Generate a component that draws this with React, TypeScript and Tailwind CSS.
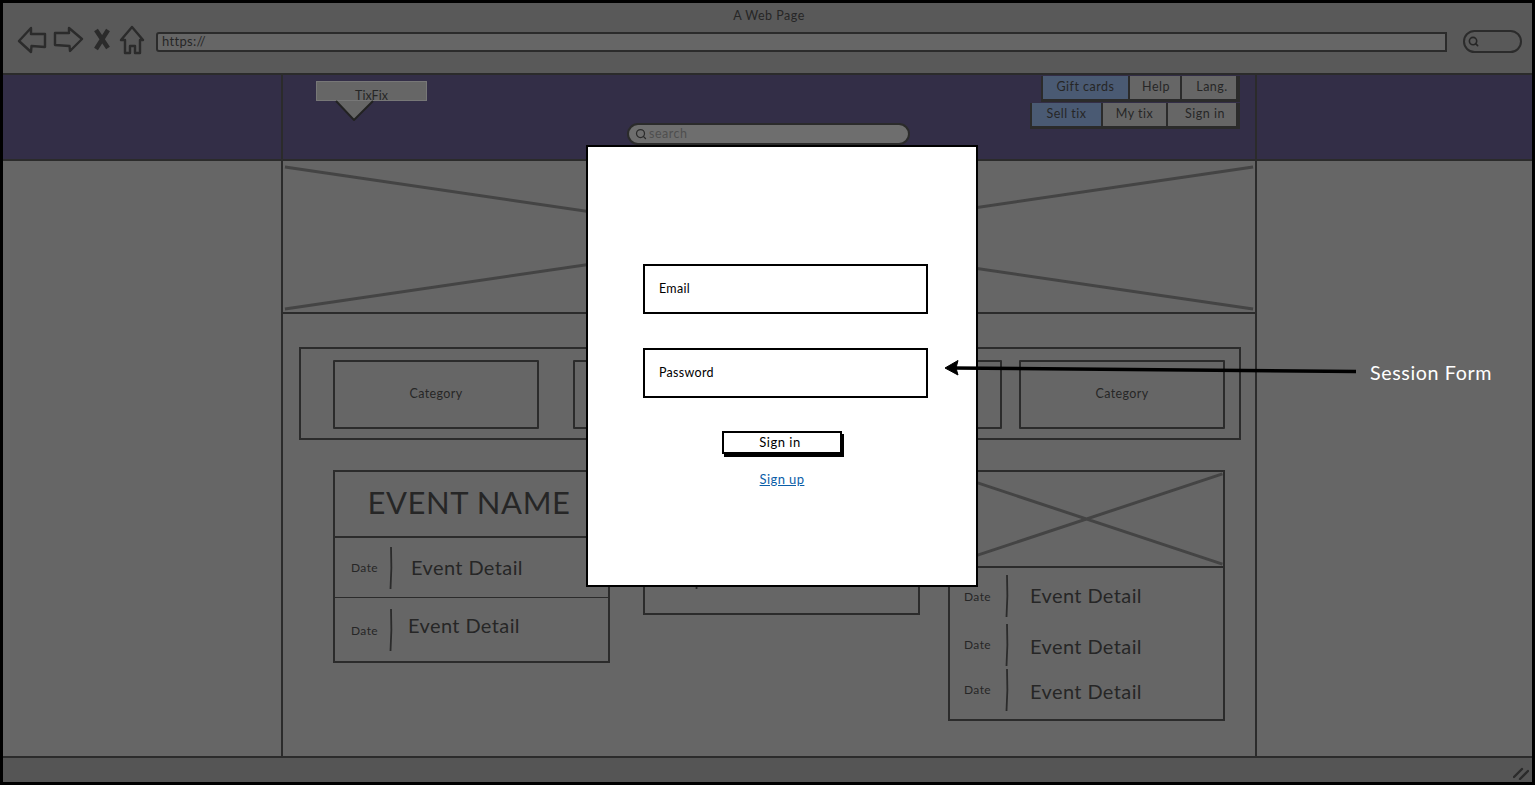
import { Search } from 'lucide-react'

const sketchFont = "[font-family:Lato,'Noto_Sans',sans-serif]"

function Cross() {
  return (
    <svg className="absolute inset-0 h-full w-full" viewBox="0 0 100 100" preserveAspectRatio="none">
      <path d="M0.2 2 L99.8 98 M0.2 98 L99.8 2" fill="none" stroke="#444" strokeWidth="3" vectorEffect="non-scaling-stroke" />
    </svg>
  )
}

function Detail({ className, dateClass, textClass }: { className: string; dateClass: string; textClass: string }) {
  return (
    <div className={`relative flex items-center ${className}`}>
      <span className={`text-[12px] tracking-[0.4px] text-[#262626] ${dateClass}`}>Date</span>
      <svg width="4" height="44" viewBox="0 0 4 44" className="shrink-0">
        <path d="M2 1 Q3 22 1.5 43" fill="none" stroke="#2b2b2b" strokeWidth="1.8" />
      </svg>
      <span className={`text-[20px] leading-7 tracking-[0.4px] text-[#262626] ${textClass}`}>Event Detail</span>
    </div>
  )
}

function CategoryBox({ className }: { className: string }) {
  return (
    <div className={`flex h-[69px] w-[206px] shrink-0 items-center justify-center rounded-[1px] border-2 border-[#2b2b2b] text-[12.5px] tracking-[0.4px] text-[#262626] ${className}`}>
      Category
    </div>
  )
}

function NavButton({ label, className, active }: { label: string; className: string; active?: boolean }) {
  return (
    <div className={`flex h-[23px] items-center justify-center text-[12.5px] tracking-[0.5px] text-[#262626] ${active ? 'bg-[#4a5a73]' : 'bg-[#666]'} ${className}`}>
      {label}
    </div>
  )
}

export default function App() {
  return (
    <div className={`relative h-[786px] w-full overflow-hidden bg-white text-[#262626] ${sketchFont}`}>
      <div className="flex h-[785px] flex-col border-[3px] border-black bg-[#666]">
        {/* Browser toolbar */}
        <div className="relative h-[72px] shrink-0 border-b-2 border-[#2b2b2b] bg-[#595959]">
          <div className="pl-[3px] pt-[5px] text-center text-[12.5px] leading-4 tracking-[0.5px]">A Web Page</div>
          <div className="mt-[1px] flex items-center pl-[14px]">
            <svg width="130" height="32" viewBox="0 0 130 32" className="shrink-0" fill="none" stroke="#2b2b2b" strokeWidth="2.4" strokeLinejoin="round">
              <path d="M14 3 L2 16 L14 27 L14.5 21 L28 22 L28 9 L14 9 Z" />
              <path d="M52 3 L65 14 L53 26 L52.5 21 L38 20 L38 8 L52 8 Z" />
              <path d="M79 5 L91 23 M91 5 L79 24" strokeWidth="4.5" strokeLinejoin="miter" />
              <path d="M115 2 L104 15 L108 15 L108 28 L113 28 L113 21 L118 21 L118 28 L123 28 L123 15 L126 15 Z" />
            </svg>
            <div className="ml-[9px] mt-[2px] flex h-[20px] w-[1291px] shrink-0 items-center rounded-l-[3px] border-2 border-[#2b2b2b] bg-[#666] pl-[4px] text-[13px] tracking-[0.3px]">
              https://
            </div>
            <div className="ml-[16px] flex h-[23px] w-[59px] shrink-0 items-center rounded-full border-2 border-[#2b2b2b] pl-[3px]">
              <Search size={11} strokeWidth={3.5} />
            </div>
          </div>
        </div>

        {/* Site header */}
        <div className="flex h-[86px] shrink-0 border-b-2 border-[#2b2b2b] bg-[#332e47]">
          <div className="w-[278px] shrink-0" />
          <div className="relative flex w-[976px] shrink-0 items-start border-x-2 border-[#2b2b2b]">
            <div className="relative ml-[33px] mt-[6px] h-[20px] w-[111px] shrink-0 border border-[#777] bg-[#666] pt-[6px] text-center text-[12.5px] leading-4">
              <span className="relative z-10">TixFix</span>
              <svg width="40" height="21" viewBox="0 0 40 21" className="absolute left-[18px] top-[18px]">
                <path d="M1 1 L19 20 L38 1 Z" fill="#666" />
                <path d="M1 1 L19 20 L38 1" fill="none" stroke="#222" strokeWidth="2" />
              </svg>
            </div>
            <div className="ml-[200px] mt-[48px] flex h-[22px] w-[283px] shrink-0 items-center rounded-full border-2 border-[#2b2b2b] bg-[#6e6e6e] pl-[6px] text-[12.5px] tracking-[0.5px] text-[#4f4f4f]">
              <Search size={12} strokeWidth={2.5} className="mr-[2px] text-[#2b2b2b]" />
              search
            </div>
            <div className="ml-auto mr-[15px] mt-[1px] flex flex-col items-end gap-[1px]">
              <div className="flex gap-[2px] border-b-[3px] border-l-[2px] border-r-[4px] border-[#2b2b2b] bg-[#2b2b2b]">
                <NavButton label="Gift cards" active className="w-[85px]" />
                <NavButton label="Help" className="w-[50px] pl-[2px]" />
                <NavButton label="Lang." className="w-[54px] pl-[6px]" />
              </div>
              <div className="flex gap-[2px] border-b-[3px] border-l-[2px] border-r-[4px] border-[#2b2b2b] bg-[#2b2b2b]">
                <NavButton label="Sell tix" active className="w-[69px]" />
                <NavButton label="My tix" className="w-[63px]" />
                <NavButton label="Sign in" className="w-[68px] pl-[6px]" />
              </div>
            </div>
          </div>
          <div className="flex-1" />
        </div>

        {/* Page body */}
        <div className="flex min-h-0 flex-1">
          <div className="w-[278px] shrink-0" />
          <div className="w-[976px] shrink-0 border-x-2 border-[#2b2b2b] pt-[3px]">
            <div className="relative h-[150px] w-full border-b-2 border-[#2b2b2b]">
              <Cross />
            </div>
            <div className="ml-[16px] mt-[33px] flex h-[93px] w-[942px] items-center border-2 border-[#2b2b2b] pt-[1px]">
              <CategoryBox className="ml-[32px]" />
              <CategoryBox className="ml-[34px]" />
              <CategoryBox className="ml-[17px]" />
              <CategoryBox className="ml-[17px]" />
            </div>
            <div className="mt-[30px] flex items-start pl-[50px]">
              <div className="h-[193px] w-[277px] shrink-0 border-2 border-[#2b2b2b]">
                <div className="flex h-[66px] items-center justify-center border-b-2 border-[#2b2b2b] pb-[3px] pr-[5px] text-[31px] tracking-[0.6px] text-[#262626]">
                  EVENT NAME
                </div>
                <Detail className="h-[60px] border-b border-[#2b2b2b]" dateClass="ml-[16px] w-[38px]" textClass="ml-[18px] mb-[2px]" />
                <Detail className="h-[63px]" dateClass="ml-[16px] w-[38px] mt-[3px]" textClass="ml-[15px] mb-[10px]" />
              </div>
              <div className="ml-[33px] h-[145px] w-[277px] shrink-0 border-2 border-[#2b2b2b]">
                <div className="h-[66px] border-b-2 border-[#2b2b2b]" />
                <Detail className="h-[60px]" dateClass="ml-[16px] w-[34px]" textClass="ml-[22px]" />
              </div>
              <div className="ml-[28px] h-[251px] w-[277px] shrink-0 border-2 border-[#2b2b2b]">
                <div className="relative -m-[2px] h-[98px] w-[277px] border-2 border-[#2b2b2b]">
                  <Cross />
                </div>
                <Detail className="mt-[8px] h-[44px]" dateClass="ml-[14px] w-[41px] mt-[1px]" textClass="ml-[21px] mb-[2px]" />
                <Detail className="mt-[5px] h-[44px]" dateClass="ml-[14px] w-[41px]" textClass="ml-[21px] mt-[2px]" />
                <Detail className="mt-[1px] h-[44px]" dateClass="ml-[14px] w-[41px]" textClass="ml-[21px] mt-[2px]" />
              </div>
            </div>
          </div>
          <div className="flex-1" />
        </div>

        {/* Status bar */}
        <div className="relative h-[26px] shrink-0 border-t-2 border-[#2b2b2b] bg-[#555]">
          <svg width="16" height="14" viewBox="0 0 16 14" className="absolute bottom-[2px] right-[3px]">
            <path d="M1 11 L9 3 M7 13 L15 5" fill="none" stroke="#2b2b2b" strokeWidth="2.4" strokeLinecap="round" />
          </svg>
        </div>
      </div>

      {/* Session modal */}
      <div className="absolute left-[586px] top-[145px] flex h-[442px] w-[392px] flex-col items-center border-2 border-black bg-white pt-[117px] text-black">
        <div className="ml-[7px] flex h-[50px] w-[285px] items-center border-2 border-black pl-[14px] text-[12.5px] tracking-[0.3px]">Email</div>
        <div className="ml-[7px] mt-[34px] flex h-[50px] w-[285px] items-center border-2 border-black pl-[14px] text-[12.5px] tracking-[0.3px]">Password</div>
        <button className="mt-[33px] flex h-[23px] w-[120px] items-center justify-center border-2 border-black bg-white pr-[4px] text-[13px] tracking-[0.5px] shadow-[2px_3px_0_#000]">
          Sign in
        </button>
        <a href="#" className="mt-[17px] text-[13px] leading-4 tracking-[0.4px] text-[#0b5ea8] underline">Sign up</a>
      </div>

      {/* Annotation */}
      <svg width="420" height="24" viewBox="0 0 420 24" className="absolute left-[942px] top-[356px]">
        <path d="M414 15.5 L10 12" fill="none" stroke="#000" strokeWidth="3.4" />
        <path d="M3 12 L16 4.5 L14 12 L16 19 Z" fill="#000" stroke="#000" strokeLinejoin="round" />
      </svg>
      <div className="absolute left-[1370px] top-[361px] text-[19.7px] leading-6 tracking-[0.6px] text-white">Session Form</div>
    </div>
  )
}
